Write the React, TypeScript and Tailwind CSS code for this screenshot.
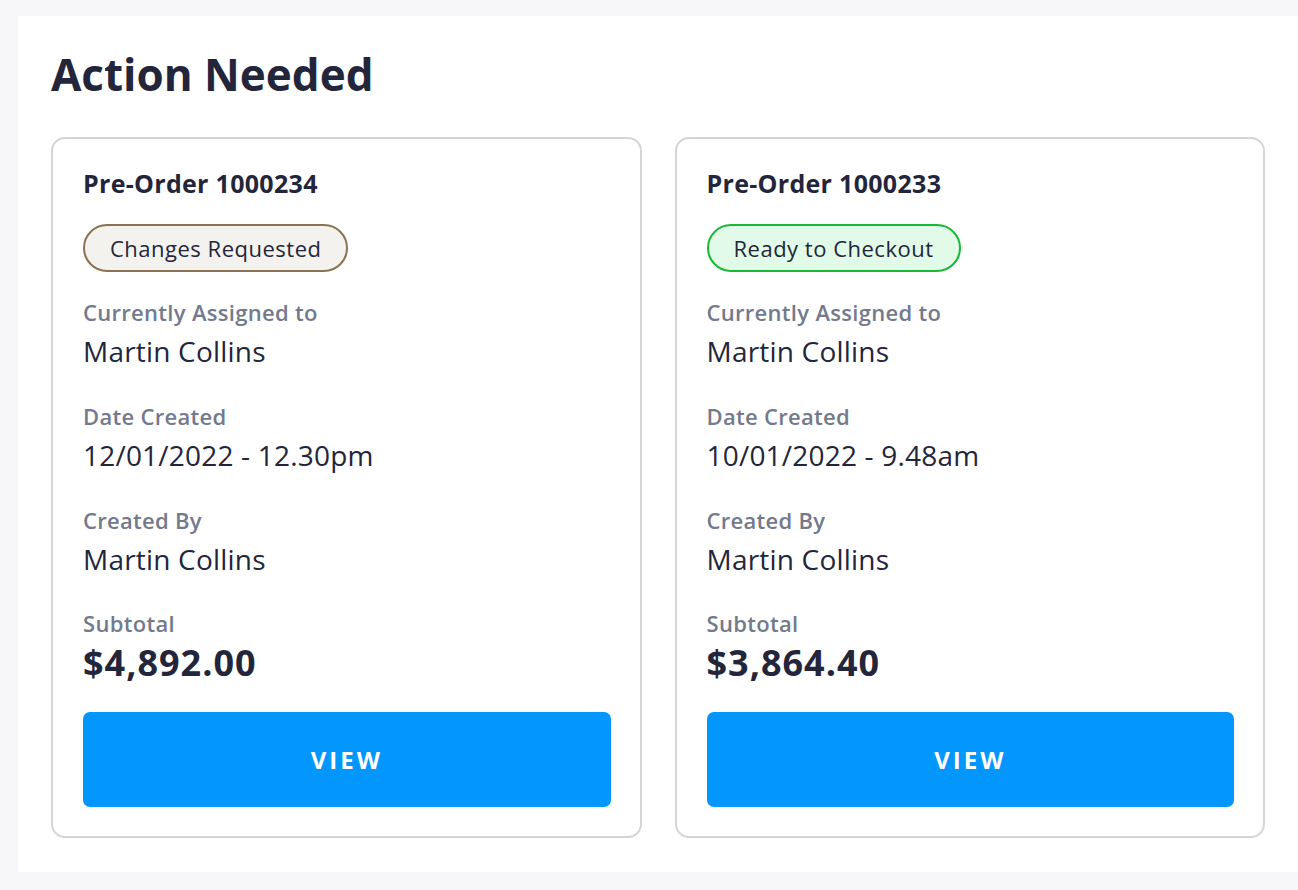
import React from "react";

type Order = {
  id: string;
  status: "changes" | "ready";
  statusLabel: string;
  assignee: string;
  created: string;
  createdBy: string;
  subtotal: string;
};

const ORDERS: Order[] = [
  {
    id: "1000234",
    status: "changes",
    statusLabel: "Changes Requested",
    assignee: "Martin Collins",
    created: "12/01/2022 - 12.30pm",
    createdBy: "Martin Collins",
    subtotal: "$4,892.00",
  },
  {
    id: "1000233",
    status: "ready",
    statusLabel: "Ready to Checkout",
    assignee: "Martin Collins",
    created: "10/01/2022 - 9.48am",
    createdBy: "Martin Collins",
    subtotal: "$3,864.40",
  },
];

function Field({ label, value, first }: { label: string; value: string; first?: boolean }) {
  return (
    <div className={first ? "mt-[26px]" : "mt-[34px]"}>
      <div className="text-[22px] font-semibold leading-[28px] tracking-[0.3px] text-[#737a8c]">{label}</div>
      <div className="mt-[8px] text-[28px] leading-[34px] tracking-[0.2px] text-[#23263a]">{value}</div>
    </div>
  );
}

function OrderCard({ o }: { o: Order }) {
  const badge =
    o.status === "changes"
      ? "border-[#8a7352] bg-[#f3f2ee]"
      : "border-[#19b937] bg-[#e1fbe8]";
  return (
    <div className="flex flex-col rounded-[14px] border-2 border-[#d5d5d9] bg-white pb-[29px] pl-[30px] pr-[29px] pt-[29px]">
      <div className="text-[25px] font-bold leading-[30px] tracking-[0.3px] text-[#23263a]">Pre-Order {o.id}</div>
      <div className="mt-[26px] flex">
        <span
          className={`inline-flex h-[48px] items-center rounded-full border-2 px-[25px] text-[22px] tracking-[0.5px] text-[#23263a] ${badge}`}
        >
          {o.statusLabel}
        </span>
      </div>
      <Field label="Currently Assigned to" value={o.assignee} first />
      <Field label="Date Created" value={o.created} />
      <Field label="Created By" value={o.createdBy} />
      <div className="mt-[34px]">
        <div className="text-[22px] font-semibold leading-[26px] tracking-[0.3px] text-[#737a8c]">Subtotal</div>
        <div className="mt-[8px] text-[36px] font-bold leading-[38px] tracking-[1px] text-[#23263a]">{o.subtotal}</div>
      </div>
      <button
        type="button"
        className="mt-[30px] flex h-[95px] w-full items-center justify-center rounded-[7px] bg-[#0396fd] text-[24px] font-bold tracking-[3px] text-white"
      >
        VIEW
      </button>
    </div>
  );
}

export default function App() {
  return (
    <div
      className="min-h-[890px] bg-[#f7f7f9] pl-[18px] pt-[16px]"
      style={{ fontFamily: "'Open Sans', 'Noto Sans', sans-serif" }}
    >
      <div className="bg-white px-[33px] pb-[34px] pt-[28px]">
        <h1 className="text-[44px] font-bold leading-[60px] text-[#23263a]">Action Needed</h1>
        <div className="mt-[33px] grid grid-cols-2 gap-[33px]">
          {ORDERS.map((o) => (
            <OrderCard key={o.id} o={o} />
          ))}
        </div>
      </div>
    </div>
  );
}
